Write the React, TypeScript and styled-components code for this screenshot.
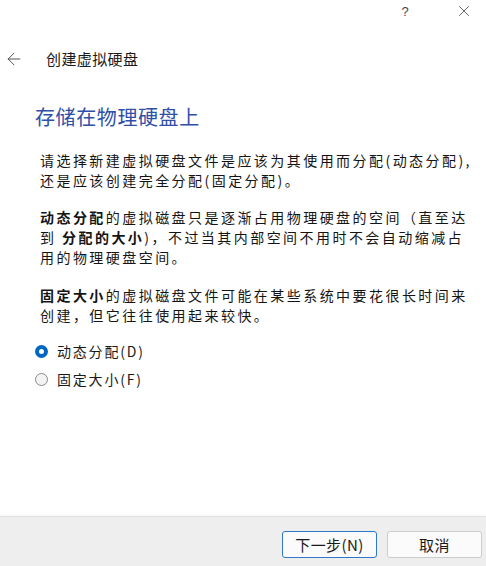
import React, { useState } from 'react';
import styled, { createGlobalStyle } from 'styled-components';
import { ArrowLeft, X } from 'lucide-react';

const GlobalStyle = createGlobalStyle`
  html, body {
    margin: 0;
    padding: 0;
    background: #ffffff;
  }
  body {
    font-family: "Noto Sans CJK SC", "Noto Sans", "Liberation Sans", sans-serif;
    color: #1a1a1a;
  }
`;

const Window = styled.div`
  width: 486px;
  height: 566px;
  display: flex;
  flex-direction: column;
  background: #ffffff;
  overflow: hidden;
`;

const TitleBar = styled.div`
  height: 22px;
  display: flex;
  justify-content: flex-end;
  align-items: center;
  padding-right: 2px;
`;

const TitleButton = styled.div<{ width: number }>`
  width: ${p => p.width}px;
  height: 22px;
  display: flex;
  align-items: center;
  justify-content: center;
  font-family: "Liberation Sans", sans-serif;
  font-size: 13px;
  color: #444;
`;

const Header = styled.div`
  margin-top: 24px;
  height: 26px;
  display: flex;
  align-items: center;
  padding-left: 4px;
`;

const BackButton = styled.div`
  width: 20px;
  display: flex;
  align-items: center;
  color: #555;
`;

const HeaderTitle = styled.div`
  margin-left: 22px;
  font-size: 15px;
  line-height: 26px;
  letter-spacing: 0.4px;
  color: #1a1a1a;
`;

const Content = styled.div`
  flex: 1;
  padding-left: 35px;
`;

const Heading = styled.h1`
  margin: 31px 0 0 0;
  font-size: 20px;
  font-weight: 400;
  line-height: 28px;
  letter-spacing: 0.6px;
  color: #2f4fa8;
`;

const Paragraph = styled.p<{ gap: number }>`
  margin: ${p => p.gap}px 0 0 5px;
  font-size: 14px;
  line-height: 20px;
  letter-spacing: 2.45px;
  white-space: nowrap;
  color: #141414;
`;

const Strong = styled.b`
  font-weight: 700;
`;

const RadioGroup = styled.div`
  margin-top: 15px;
  display: flex;
  flex-direction: column;
  gap: 6px;
`;

const RadioRow = styled.label`
  height: 22px;
  display: flex;
  align-items: center;
  cursor: pointer;
`;

const RadioCircle = styled.span<{ checked: boolean }>`
  box-sizing: border-box;
  width: 13px;
  height: 13px;
  border-radius: 50%;
  background: ${p => (p.checked ? '#ffffff' : '#f3f3f3')};
  border: ${p => (p.checked ? '4px solid #0067c0' : '1px solid #8a8a8a')};
`;

const RadioLabel = styled.span`
  margin-left: 9px;
  font-size: 14px;
  letter-spacing: 1.8px;
  color: #1a1a1a;
`;

const Footer = styled.div`
  height: 50px;
  background: #eeeeee;
  border-top: 1px solid #e2e2e2;
  box-shadow: 0 -1px 2px rgba(0, 0, 0, 0.04);
  display: flex;
  justify-content: flex-end;
  align-items: flex-start;
  gap: 10px;
  padding: 14px 4px 0 0;
  box-sizing: border-box;
`;

const Button = styled.button<{ primary?: boolean }>`
  width: 95px;
  height: 27px;
  box-sizing: border-box;
  border-radius: 3px;
  border: 1px solid ${p => (p.primary ? '#2e78c8' : '#cccccc')};
  background: #fbfbfb;
  font-family: "Noto Sans CJK SC", "Liberation Serif", serif;
  font-size: 15px;
  letter-spacing: 0.4px;
  color: #1a1a1a;
  padding: 0;
  line-height: 25px;
`;

export default function App() {
  const [mode, setMode] = useState<'dynamic' | 'fixed'>('dynamic');

  return (
    <Window>
      <GlobalStyle />
      <TitleBar>
        <TitleButton width={22}>?</TitleButton>
        <TitleButton width={40} style={{ marginLeft: 28 }}>
          <X size={18} strokeWidth={1} color="#333" />
        </TitleButton>
      </TitleBar>

      <Header>
        <BackButton>
          <ArrowLeft size={20} strokeWidth={1.2} />
        </BackButton>
        <HeaderTitle>创建虚拟硬盘</HeaderTitle>
      </Header>

      <Content>
        <Heading>存储在物理硬盘上</Heading>

        <Paragraph gap={19}>
          请选择新建虚拟硬盘文件是应该为其使用而分配(动态分配),
          <br />
          还是应该创建完全分配(固定分配)。
        </Paragraph>

        <Paragraph gap={17}>
          <Strong>动态分配</Strong>的虚拟磁盘只是逐渐占用物理硬盘的空间（直至达
          <br />
          到 <Strong>分配的大小</Strong>)，不过当其内部空间不用时不会自动缩减占
          <br />
          用的物理硬盘空间。
        </Paragraph>

        <Paragraph gap={18}>
          <Strong>固定大小</Strong>的虚拟磁盘文件可能在某些系统中要花很长时间来
          <br />
          创建，但它往往使用起来较快。
        </Paragraph>

        <RadioGroup>
          <RadioRow onClick={() => setMode('dynamic')}>
            <RadioCircle checked={mode === 'dynamic'} />
            <RadioLabel>动态分配(D)</RadioLabel>
          </RadioRow>
          <RadioRow onClick={() => setMode('fixed')}>
            <RadioCircle checked={mode === 'fixed'} />
            <RadioLabel>固定大小(F)</RadioLabel>
          </RadioRow>
        </RadioGroup>
      </Content>

      <Footer>
        <Button primary>下一步(N)</Button>
        <Button>取消</Button>
      </Footer>
    </Window>
  );
}
